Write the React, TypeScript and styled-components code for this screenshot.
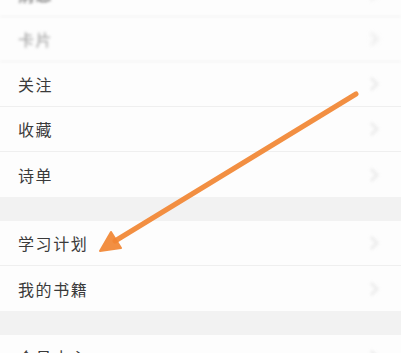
import React from 'react';
import styled, {createGlobalStyle} from 'styled-components';

const GlobalStyle = createGlobalStyle`
  html, body {
    margin: 0;
    padding: 0;
    background: #fdfdfd;
    overflow: hidden;
  }
  body {
    font-family: "Noto Sans CJK SC", "Noto Sans", sans-serif;
  }
`;

const Page = styled.div`
  position: relative;
  width: 401px;
  height: 353px;
  overflow: hidden;
  background: #fdfdfd;
`;

const List = styled.div`
  display: flex;
  flex-direction: column;
  margin-top: -28px;
`;

const Row = styled.div<{$blurred?: boolean; $last?: boolean}>`
  display: flex;
  align-items: center;
  justify-content: space-between;
  height: 45px;
  padding: 0 22px 0 18px;
  box-sizing: border-box;
  border-bottom: ${(p) => (p.$last ? 'none' : '1px solid #efefef')};
  filter: ${(p) => (p.$blurred ? 'blur(1.4px)' : 'none')};
`;

const Label = styled.span<{$muted?: boolean}>`
  font-size: 16px;
  letter-spacing: 1.6px;
  color: ${(p) => (p.$muted ? '#9a9a9a' : '#3a3a3a')};
`;

const Gap = styled.div`
  height: 24px;
  background: #f2f2f2;
`;

const Chevron = styled.svg`
  width: 10px;
  height: 14px;
  filter: blur(1.6px);
`;

const ArrowLayer = styled.svg`
  position: absolute;
  left: 0;
  top: 0;
  pointer-events: none;
`;

const More = () => (
  <Chevron viewBox="0 0 10 14">
    <path d="M2 1 L8 7 L2 13" fill="none" stroke="#ececec" strokeWidth="3" />
  </Chevron>
);

interface Item {
  label: string;
  blurred?: boolean;
  muted?: boolean;
  last?: boolean;
}

const groups: Item[][] = [
  [
    {label: '消息', blurred: true},
    {label: '卡片', blurred: true, muted: true},
    {label: '关注'},
    {label: '收藏'},
    {label: '诗单', last: true},
  ],
  [{label: '学习计划'}, {label: '我的书籍', last: true}],
  [{label: '会员中心'}],
];

const App = (): JSX.Element => {
  return (
    <Page>
      <GlobalStyle />
      <List>
        {groups.map((group, gi) => (
          <React.Fragment key={gi}>
            {gi > 0 && <Gap />}
            {group.map((item) => (
              <Row key={item.label} $blurred={item.blurred} $last={item.last}>
                <Label $muted={item.muted}>{item.label}</Label>
                <More />
              </Row>
            ))}
          </React.Fragment>
        ))}
      </List>
      <ArrowLayer width="401" height="353" viewBox="0 0 401 353">
        <line
          x1="356"
          y1="94"
          x2="115"
          y2="241"
          stroke="#f28633"
          strokeWidth="5"
          strokeLinecap="round"
          opacity="0.92"
        />
        <polygon
          points="100,251 121,248 111,232"
          fill="#f28633"
          stroke="#f28633"
          strokeWidth="2"
          strokeLinejoin="round"
          opacity="0.92"
        />
      </ArrowLayer>
    </Page>
  );
};

export default App;
